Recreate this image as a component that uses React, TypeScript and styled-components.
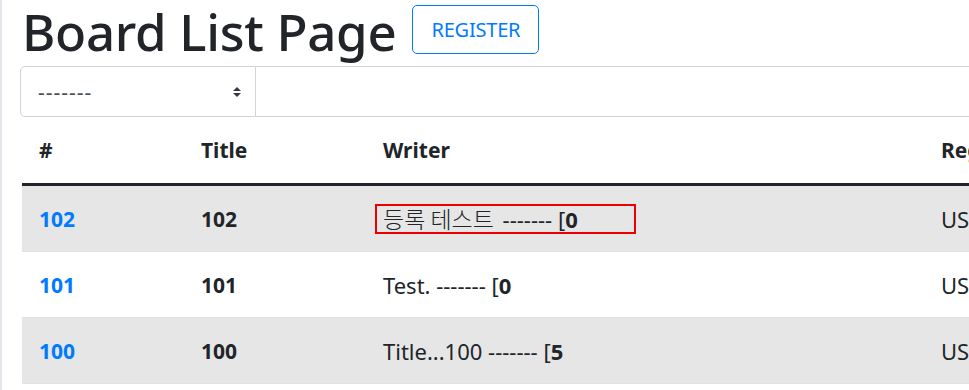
import React from 'react';
import styled, { createGlobalStyle } from 'styled-components';

const GlobalStyle = createGlobalStyle`
  html, body {
    margin: 0;
    padding: 0;
    background: #ffffff;
  }
  body {
    font-family: "Noto Sans", "Noto Sans CJK KR", sans-serif;
    color: #212529;
    overflow: hidden;
  }
`;

const Page = styled.div`
  box-sizing: border-box;
  min-height: 390px;
  width: 969px;
  border-left: 2px solid #e3e6ea;
  padding-left: 18px;
  overflow: hidden;
`;

const Header = styled.div`
  display: flex;
  align-items: flex-start;
  gap: 16px;
  height: 66px;
`;

const Title = styled.h1`
  margin: 0 0 0 2px;
  font-size: 51px;
  font-weight: 500;
  line-height: 62px;
  letter-spacing: -0.3px;
  white-space: nowrap;
`;

const OutlineButton = styled.button`
  box-sizing: border-box;
  margin-top: 5px;
  height: 49px;
  padding: 0 18px;
  border: 1px solid #007bff;
  border-radius: 5px;
  background: transparent;
  color: #007bff;
  font-family: inherit;
  font-size: 20px;
  letter-spacing: -0.2px;
  cursor: pointer;
`;

const SearchGroup = styled.div`
  display: flex;
  height: 51px;
  width: 1200px;
`;

const SelectBox = styled.div`
  box-sizing: border-box;
  position: relative;
  display: flex;
  align-items: center;
  width: 236px;
  padding-left: 17px;
  border: 1px solid #ced4da;
  border-radius: 5px 0 0 5px;
  color: #495057;
  font-size: 21px;
  letter-spacing: 1px;
`;

const Arrow = styled.svg`
  position: absolute;
  right: 14px;
  top: 50%;
  margin-top: -6px;
`;

const SearchInput = styled.div`
  flex: 1;
  border: 1px solid #ced4da;
  border-left: none;
`;

const Table = styled.table`
  margin-left: 2px;
  width: 1300px;
  table-layout: fixed;
  border-collapse: collapse;
`;

const Th = styled.th<{ $w: number }>`
  box-sizing: border-box;
  width: ${(p) => p.$w}px;
  text-align: left;
  padding: 17px 17px 16px;
  line-height: 33px;
  font-size: 21px;
  font-weight: 700;
  border-bottom: 3px solid #212529;
  white-space: nowrap;
`;

const Row = styled.tr<{ $striped: boolean }>`
  background: ${(p) => (p.$striped ? '#e6e6e6' : '#ffffff')};
`;

const Td = styled.td<{ $bold?: boolean }>`
  padding: 16px 17px;
  line-height: 32px;
  font-size: ${(p) => (p.$bold ? 21 : 22)}px;
  font-weight: ${(p) => (p.$bold ? 700 : 400)};
  border-bottom: 1px solid #dee2e6;
  white-space: nowrap;
  overflow: hidden;
`;

const NoLink = styled.a`
  color: #007bff;
  font-size: 21px;
  font-weight: 700;
  text-decoration: none;
`;

const Writer = styled.span<{ $marked?: boolean }>`
  position: relative;
  &::after {
    content: '';
    display: ${(p) => (p.$marked ? 'block' : 'none')};
    position: absolute;
    left: -8px;
    top: 0;
    width: 261px;
    height: 30px;
    box-sizing: border-box;
    border: 2px solid #ee0000;
  }
`;

const Hangul = styled.span`
  font-family: "Noto Sans CJK KR", sans-serif;
  font-size: 23px;
  font-weight: 300;
  margin-right: 3px;
`;

const Count = styled.b`
  font-weight: 700;
`;

const rows = [
  { no: 102, title: '102', writer: '등록 테스트', replies: 0, marked: true },
  { no: 101, title: '101', writer: 'Test.', replies: 0 },
  { no: 100, title: '100', writer: 'Title...100', replies: 5 }
];

export default function App() {
  return (
    <Page>
      <GlobalStyle />
      <Header>
        <Title>Board List Page</Title>
        <OutlineButton>REGISTER</OutlineButton>
      </Header>
      <SearchGroup>
        <SelectBox>
          -------
          <Arrow width="8" height="12" viewBox="0 0 4 5">
            <path d="M2 0L0 2h4zm0 5L0 3h4z" fill="#343a40" />
          </Arrow>
        </SelectBox>
        <SearchInput />
      </SearchGroup>
      <Table>
        <thead>
          <tr>
            <Th $w={162}>#</Th>
            <Th $w={182}>Title</Th>
            <Th $w={558}>Writer</Th>
            <Th $w={398}>RegDate</Th>
          </tr>
        </thead>
        <tbody>
          {rows.map((r, i) => (
            <Row key={r.no} $striped={i % 2 === 0}>
              <Td>
                <NoLink href="#">{r.no}</NoLink>
              </Td>
              <Td $bold>{r.title}</Td>
              <Td>
                <Writer $marked={r.marked}>
                  {r.marked ? <Hangul>{r.writer}</Hangul> : r.writer} ------- [
                  <Count>{r.replies}</Count>
                </Writer>
              </Td>
              <Td>USER00</Td>
            </Row>
          ))}
        </tbody>
      </Table>
    </Page>
  );
}
